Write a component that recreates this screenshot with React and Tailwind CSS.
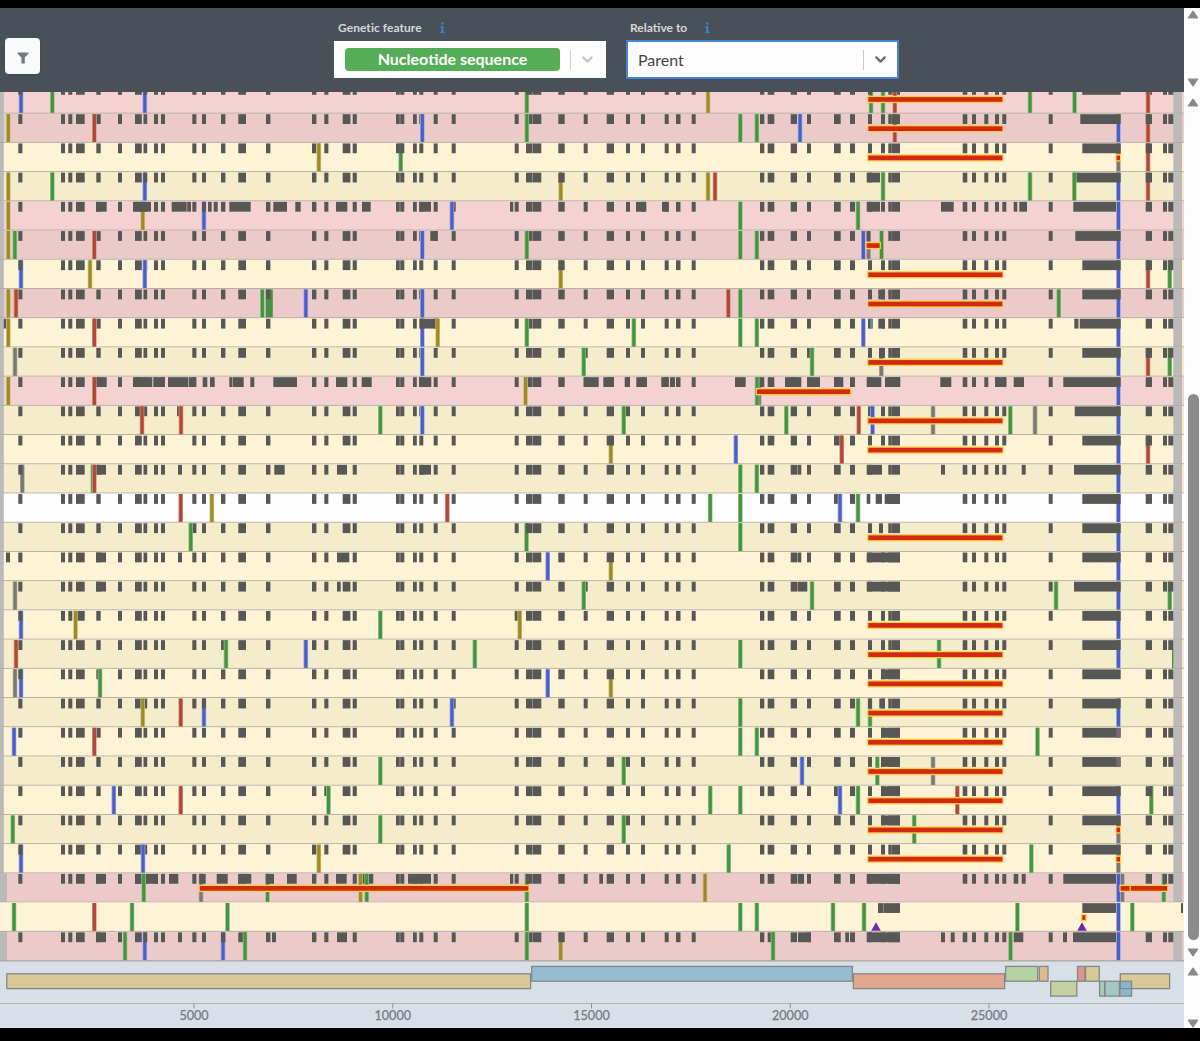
import React from "react";
import { ChevronDown } from "lucide-react";

const PITCH = 29.22;
const W = 4.6;

// Regions that are masked in nearly every sequence: [start, end] in pixels
const BASE = [
  [18.3, 22.4], [61, 65], [68.3, 72.3], [76, 84.7], [96.3, 100.7], [118, 122], [135, 141.8],
  [143.5, 147.2], [154, 158], [161, 165], [192.3, 196.4], [202, 206], [221, 225.4], [238.3, 246],
  [266, 270.4], [312, 316.4], [324.3, 328.4], [342.7, 350.4], [352.7, 356.8], [396, 399.8],
  [400.2, 404.3], [413, 416.8], [419.3, 423.3], [433.7, 437.7], [451.7, 455.7], [514.7, 518.7],
  [526, 532.4], [532.6, 541.3], [558.3, 564.7], [583.7, 587.7], [606.7, 614], [626, 630],
  [641, 645], [664.7, 668.7], [676, 680.5], [691.7, 695.7], [760, 764.3], [767.7, 774.3],
  [790.7, 797], [807, 811], [834, 840.7], [850, 855], [868, 872], [881, 885], [888.3, 891.8],
  [892, 900], [962.7, 967.3], [972, 976], [984.3, 988.3], [995, 999], [1002.3, 1006.3],
  [1048.7, 1052.7], [1145.7, 1152], [1163, 1167], [1168.3, 1173.3],
];

const PL = "#f4d2d1";
const PD = "#ebcac9";
const CL = "#fef4d5";
const CD = "#f4ecca";

const FILL = { g: "#469142", b: "#4a5fc4", r: "#ad4836", o: "#998a2e", k: "#7b7870", t: "#668f8c", p: "#77697b" };
const EDGE = { g: "#8cc884", b: "#97a6ee", r: "#dd9180", o: "#d3c265", k: "#aaa69b", t: "#86a8a4", p: "#8a7a8c" };

const SPIKE = [867.7, 1003.2];

/* v: variants "<kind><x>", upper case is drawn above the masks
   m: additional masks, cut: start of base masks left out
   long: extent of the N region, bars: deletions */
const ROWS = [
  { bg: PL, v: "b21 g52.3 b144.8 g526.8 o708 g871 G883 R894.8 g1030 g1074.5 R1148", bars: [SPIKE] },
  { bg: PD, v: "O8.3 R94.3 B422.3 G526.8 g740.3 g756.8 b800 r894.8 b1118.4 r1148", long: [1080.3, 1120.7], bars: [SPIKE] },
  { bg: CL, v: "O318.8 g400.7 k1118.4 r1148", bars: [SPIKE, [1116, 1120.8]] },
  { bg: CD, v: "O8.3 g52.3 b144.8 o560.7 o708 r715 G883 g1030 G1074.3 b1118.4 r1148", m: [[866.7, 880]], long: [1076, 1120.7] },
  { bg: PL, v: "O8.3 o142.7 b203.9 B451.9 g740.3 g858 B1118.4", m: [[96, 106.7], [133, 137.3], [138, 151], [171.7, 186.7], [187.2, 191], [208, 211.7], [213.7, 217.7], [229.3, 250.7], [273.3, 287], [295.3, 300.7], [336, 347.3], [362, 370.7], [419.3, 431], [510, 513.3], [636, 646.3], [662, 668.7], [866.7, 880], [941, 953.7], [1013.7, 1017.3], [1019.3, 1027]], cut: [342.7, 238.3], long: [1073.3, 1116] },
  { bg: PD, v: "O8.3 g14.8 R94.3 B422.3 G526.8 g740.3 g756.8 b863.3 k868.5 G881.5 b1118.4", m: [[430.3, 437.7], [866.7, 870.3]], cut: [868, 881], long: [1075.3, 1120.7], bars: [[866, 880.5]] },
  { bg: CL, v: "b21 O90 B144.8 o560.7 b1118.4 r1148 g1169.7", bars: [SPIKE] },
  { bg: PD, v: "O8.3 R16 g262.3 b305.8 B422.3 r728.3 g740.3 g1058.7 b1118.4", wide: [265.7, 272.8], m: [[878.3, 885]], bars: [SPIKE] },
  { bg: CL, v: "O8.3 R94.3 b422.3 O437.7 G526.8 g633.8 g740.3 g756.8 b863.3 b1118.4", m: [[3.7, 8], [420, 437.7], [878.3, 885], [1074.3, 1078.5]], teal: true, long: [1079.7, 1120.7] },
  { bg: CD, v: "k15 B422.3 G583.7 G812 k881.3 b1118.4 r1148 g1169.7", m: [[879, 885]], bars: [SPIKE] },
  { bg: PL, v: "O8.3 R94.3 O525.5 k759.2 G757 b1118.4", m: [[96, 106.7], [133, 152.3], [153.3, 157.4], [158, 165], [168, 188], [188.6, 196], [202.7, 207.3], [210, 214.7], [229.3, 232.5], [233, 243.7], [250.3, 254.3], [273.3, 297], [336, 347.3], [361.7, 371.7], [419, 431.3], [583.7, 598.7], [603.3, 614], [624.7, 630], [636.3, 647], [661.3, 668.7], [670, 675], [735, 745.7], [785, 801.3], [807, 820], [834, 843.3], [866.7, 881.3], [885, 900.3], [940.3, 951.3], [995, 1006.3], [1013.7, 1024]], cut: [202, 221, 238.3, 342.7, 881, 266], long: [1063.3, 1120.7], bars: [[756.3, 851]] },
  { bg: CD, v: "R142 R181 g380.3 B422.3 G623.7 g786.3 R858.7 B872.5 k933 G1010.3 k1035 b1118.4", m: [[177, 181]], long: [1074.7, 1120.7], bars: [SPIKE] },
  { bg: CL, v: "o610.8 b735.8 R841.7 b1118.4 r1148", bars: [SPIKE] },
  { bg: CD, v: "k22.3 G92.8 R94.3 g740.3 g756.8 b1118.4", m: [[96, 106], [178, 182], [274.3, 284.7], [337, 347], [419.3, 431], [797.4, 801.3], [866.7, 882], [941, 945], [1021.7, 1025.7]], cut: [342.7, 881], long: [1074, 1120.7] },
  { bg: "#fdfdfd", v: "R180.7 O211.8 R447.3 g710.2 g740.3 B840 g858 b1118.4", m: [[866.7, 870.3], [875.7, 882], [884.7, 900]], cut: [868, 881] },
  { bg: CD, v: "G190.7 g526.5 g740.3 b1118.4", m: [[879, 883]], cut: [881], bars: [SPIKE] },
  { bg: CL, v: "B547.7 o610.8 b1118.4", m: [[6, 10], [96, 106], [178, 182], [337, 349.3], [797.4, 801.3], [866.7, 900]], cut: [342.7] },
  { bg: CD, v: "k15 G583.7 G812 g1056 b1118.4 g1169.7", m: [[96, 106], [337, 340.7], [797.4, 807.3], [866.7, 900]], cut: [807], long: [1074, 1120.7] },
  { bg: CL, v: "b21 O75.5 g380.3 O519.7 b1118.4", bars: [SPIKE] },
  { bg: CD, v: "R16 G226 b305.8 g474.8 g740.3 g939 b1118.4", bars: [SPIKE], tail: true },
  { bg: CL, v: "k15 b21 G100 B547.7 o610.8", m: [[881, 900]], bars: [SPIKE] },
  { bg: CD, v: "O142.7 R180.7 b203.9 B451.9 g740.3 g858 g870 b1118.4", m: [[879.3, 885]], bars: [SPIKE] },
  { bg: CL, v: "b14 R94.3 g740.3 g756.8 g1037.5", m: [[881, 900]], bars: [SPIKE], tint: true },
  { bg: CD, v: "g380.3 G623.7 b802 g877.3 k933", m: [[881, 900]], bars: [SPIKE], tint: true },
  { bg: CL, v: "b113.8 R180.7 G328.5 g710.2 g740.3 B840 g858 r957.3 b1118.4 g1151.3", m: [[881, 900]], bars: [SPIKE] },
  { bg: CD, v: "g12.8 g380.3 G623.7 g914.2 k1118.4", m: [[881, 900]], bars: [SPIKE, [1116, 1120.8]] },
  { bg: CL, v: "b21 B143 O318.8 g728.7 g1031.3 k1118.4", bars: [SPIKE, [1116, 1120.8]] },
  { bg: PD, left: 7, v: "G143.7 k201 g267.5 O360.5 G366.7 g526.8 O705 B1118.4 k1122.3 g1163.8", m: [[96, 106], [135, 158], [169, 178.3], [199.3, 205.7], [216.7, 227.7], [238.3, 251.3], [265.7, 274], [287, 296.7], [336, 346.7], [358.3, 373.3], [408, 431], [510, 513.3], [599.3, 603], [797.6, 804], [866.7, 900], [1013.7, 1018.3], [1021.7, 1025.7]], cut: [202, 221, 342.7], long: [1063.3, 1116], bars: [[199.2, 529.2], [1120, 1131], [1130.2, 1168]] },
  { bg: CL, full: true, v: "g14 r94.3 g132 g227.5 g526.8 g740.3 g756.8 g833 g864 g1017.4 b1118.4 g1132.3", m: [[878, 883], [883.3, 900], [1181, 1183]], long: [1082.3, 1116], bars: [[1081.7, 1086.2]], tri: [876, 1082] },
  { bg: PD, left: 7, v: "G125 b144.8 b223 G245 G526.8 o560.7 G773 G1010.5 B1118.4", m: [[96, 106], [178, 182], [272, 276], [337, 347], [798, 811], [845.3, 849], [866.7, 900], [941, 945], [950.7, 954.7], [1013.7, 1023.3], [1063, 1067]], cut: [342.7], long: [1073, 1116] },
];

function Variant({ code, y }) {
  const kind = code[0].toLowerCase();
  const x = Number(code.slice(1)) - W / 2;
  return (
    <g>
      <rect x={x} y={y} width={W} height={28.4} fill={EDGE[kind]} />
      <rect x={x + 0.8} y={y} width={W - 1.5} height={28.4} fill={FILL[kind]} />
    </g>
  );
}

function Track({ row, index }) {
  const top = index * PITCH - 7.6;
  const y = top + 0.5;
  const codes = row.v.split(" ");
  const isOver = (c) => c[0] === c[0].toUpperCase();
  const cut = row.cut || [];
  const base = row.full ? [] : BASE.filter((b) => !cut.includes(b[0]));
  const masks = [...base, ...(row.m || []), row.long || [1082.3, 1120.7]];
  const left = row.full ? 0 : row.left || 3.8;
  return (
    <g>
      <rect x="0" y={top} width="1184" height={PITCH} fill={row.full ? row.bg : "#bbbab8"} />
      <rect x={left} y={top} width={(row.full ? 1184 : 1173.3) - left} height={PITCH} fill={row.bg} />
      {!row.full && <rect x="1182" y={top} width="2" height={PITCH} fill={row.bg} />}
      {row.wide && (
        <rect x={row.wide[0]} y={y} width={row.wide[1] - row.wide[0]} height="28.4" fill={FILL.g} />
      )}
      {codes.filter((c) => !isOver(c)).map((c) => <Variant key={c} code={c} y={y} />)}
      {masks.map(([a, b], i) => (
        <rect key={i} x={a} y={top + 0.6} width={b - a} height="9.8" fill="#575755" />
      ))}
      {row.teal && <rect x="870" y={top + 0.6} width="3" height="9.8" fill={FILL.t} />}
      {row.tint && <rect x="1116.3" y={top + 0.6} width="4" height="9.8" fill={FILL.p} />}
      {row.tail && <rect x="1172" y={top + 10.4} width="1.4" height="18.4" fill={FILL.g} />}
      {codes.filter(isOver).map((c) => <Variant key={c} code={c} y={y} />)}
      <rect x="0" y={top + PITCH - 0.9} width="1184" height="1.1" fill="#aeaca0" />
      {(row.bars || []).map(([a, b]) => (
        <g key={a}>
          <rect x={a - 0.6} y={top + 11.3} width={b - a + 1} height="7.4" fill="#fdd24e" />
          <rect x={a + 0.6} y={top + 12.7} width={b - a - 1.4} height="4.7" fill="#d32912" />
        </g>
      ))}
      {(row.tri || []).map((x) => (
        <path key={x} d={`M${x} ${top + 19.8}l4.8 8.5h-9.6z`} fill="#6c2aa8" />
      ))}
    </g>
  );
}

const GENES = [
  [6.8, 530.6, 973.8, "#d9c690"],
  [531.7, 852.4, 966.4, "#90b9d0"],
  [853.4, 1004.6, 973.8, "#e2a488"],
  [1005.6, 1037.7, 966.4, "#b1d09b"],
  [1039.3, 1048, 966.4, "#ddb788"],
  [1050.7, 1076.8, 981.3, "#c3cf98"],
  [1077.5, 1085, 966.4, "#da8e87"],
  [1085.6, 1099.2, 966.4, "#d5c98d"],
  [1120.3, 1169.6, 973.8, "#d9c690"],
  [1099.6, 1104.6, 981.3, "#a7c9b4"],
  [1105, 1119.4, 981.3, "#9cc6c2"],
  [1119.8, 1131.6, 981.3, "#86b1ca"],
];

function GeneMap() {
  return (
    <svg width="1184" height="67" viewBox="0 961 1184 67" className="block bg-[#d9dfe7]">
      <rect x="0" y="961" width="1184" height="1" fill="#c2c4c6" />
      {GENES.map(([a, b, y, fill]) => (
        <rect key={a} x={a} y={y} width={b - a} height="14.8" fill={fill} fillOpacity="0.93" stroke="#838989" strokeWidth="1.3" />
      ))}
      <path d="M1120.3 981.3V988.6H1131.6" fill="none" stroke="#6f8a90" strokeWidth="1" />
      <path d="M0 1003.5H1184" stroke="#b0b3b6" />
      {[5000, 10000, 15000, 20000, 25000].map((n) => {
        const x = 194 + (n / 5000 - 1) * 198.75;
        return (
          <g key={n}>
            <path d={`M${x} 1003v5.5`} stroke="#8f9397" />
            <text x={x} y="1020.4" textAnchor="middle" fontSize="12.6" fill="#777b80" stroke="#777b80" strokeWidth="0.25">{n}</text>
          </g>
        );
      })}
    </svg>
  );
}

function Arrow({ down }) {
  return (
    <svg width="12" height="9" viewBox="0 0 12 9" className={down ? "rotate-180" : ""}>
      <path d="M6 1.2L10.6 7.8H1.4z" fill="#878787" stroke="#878787" strokeWidth="1.2" strokeLinejoin="round" />
    </svg>
  );
}

function Info() {
  return (
    <svg width="7" height="12" viewBox="0 0 7 12" fill="#3387cf">
      <circle cx="3.4" cy="1.6" r="1.3" />
      <path d="M1.2 4.2h3.2v5.6h1.3v1.2H1.1V9.8h1.1V5.4h-1z" />
    </svg>
  );
}

export default function App() {
  return (
    <div className="flex h-[1041px] w-[1200px] flex-col overflow-hidden bg-black pt-2 font-['Lato',sans-serif]">
      <div className="flex h-[1020px] bg-[#fcfcfc]">
        <main className="w-[1184px]">
          <header className="flex h-[84px] items-start bg-[#4a5058] pl-[5px]">
            <button className="mt-[30px] flex h-[36px] w-[35px] items-center justify-center rounded-[4px] bg-[#f9fbfb] shadow">
              <svg width="12" height="12" viewBox="0 0 12 12" className="mt-1">
                <path d="M.6.6h10.8v1.2L7.8 5.5v5.9H4.4V5.5L.6 1.8z" fill="#737b82" />
              </svg>
            </button>
            <div className="ml-[294px] w-[272px] pt-[13px]">
              <div className="flex h-[14px] items-center pl-1 text-[12px] font-bold text-[#d6d8db]">
                <span className="w-[101px] tracking-[0.05px]">Genetic feature</span>
                <Info />
              </div>
              <div className="mt-[6px] flex h-[37px] items-center bg-[#fdfdfd] pl-[11px]">
                <span className="flex h-[23px] w-[215px] items-center justify-center rounded-[4px] bg-[#55ad57] pb-[2px] text-[16px] font-bold text-white">
                  Nucleotide sequence
                </span>
                <span className="ml-[10px] h-5 w-px bg-[#cfcfcf]" />
                <ChevronDown size={17} strokeWidth={3} color="#c6c6c6" className="ml-[8px]" />
              </div>
            </div>
            <div className="ml-[20px] w-[273px] pt-[13px]">
              <div className="flex h-[14px] items-center pl-1 text-[12px] font-bold text-[#d6d8db]">
                <span className="w-[74px]">Relative to</span>
                <Info />
              </div>
              <div className="mt-[5px] flex h-[39px] items-center border-2 border-[#4284d0] bg-[#fdfdfd] pl-[10px]">
                <span className="w-[225px] text-[16px] text-[#444]">Parent</span>
                <span className="h-5 w-px bg-[#c8c8c8]" />
                <ChevronDown size={17} strokeWidth={3} color="#666" className="ml-[8px]" />
              </div>
            </div>
          </header>
          <svg width="1184" height="869" viewBox="0 0 1184 869" className="block">
            {ROWS.map((row, i) => <Track key={i} row={row} index={i} />)}
          </svg>
          <GeneMap />
        </main>
        <aside className="flex w-4 flex-col items-center bg-[#fcfcfc] pl-[2px]">
          <div className="flex h-[84px] flex-col justify-between pt-[2px] pb-[5px]">
            <Arrow />
            <Arrow down />
          </div>
          <div className="flex h-[869px] flex-col items-center justify-between pt-[6px] pb-1">
            <Arrow />
            <div className="mt-auto mb-[8px] h-[546px] w-[11px] rounded-full bg-[#8b8b8b]" />
            <Arrow down />
          </div>
          <div className="flex h-[67px] flex-col justify-between pt-[6px]">
            <Arrow />
            <Arrow down />
          </div>
        </aside>
      </div>
    </div>
  );
}
